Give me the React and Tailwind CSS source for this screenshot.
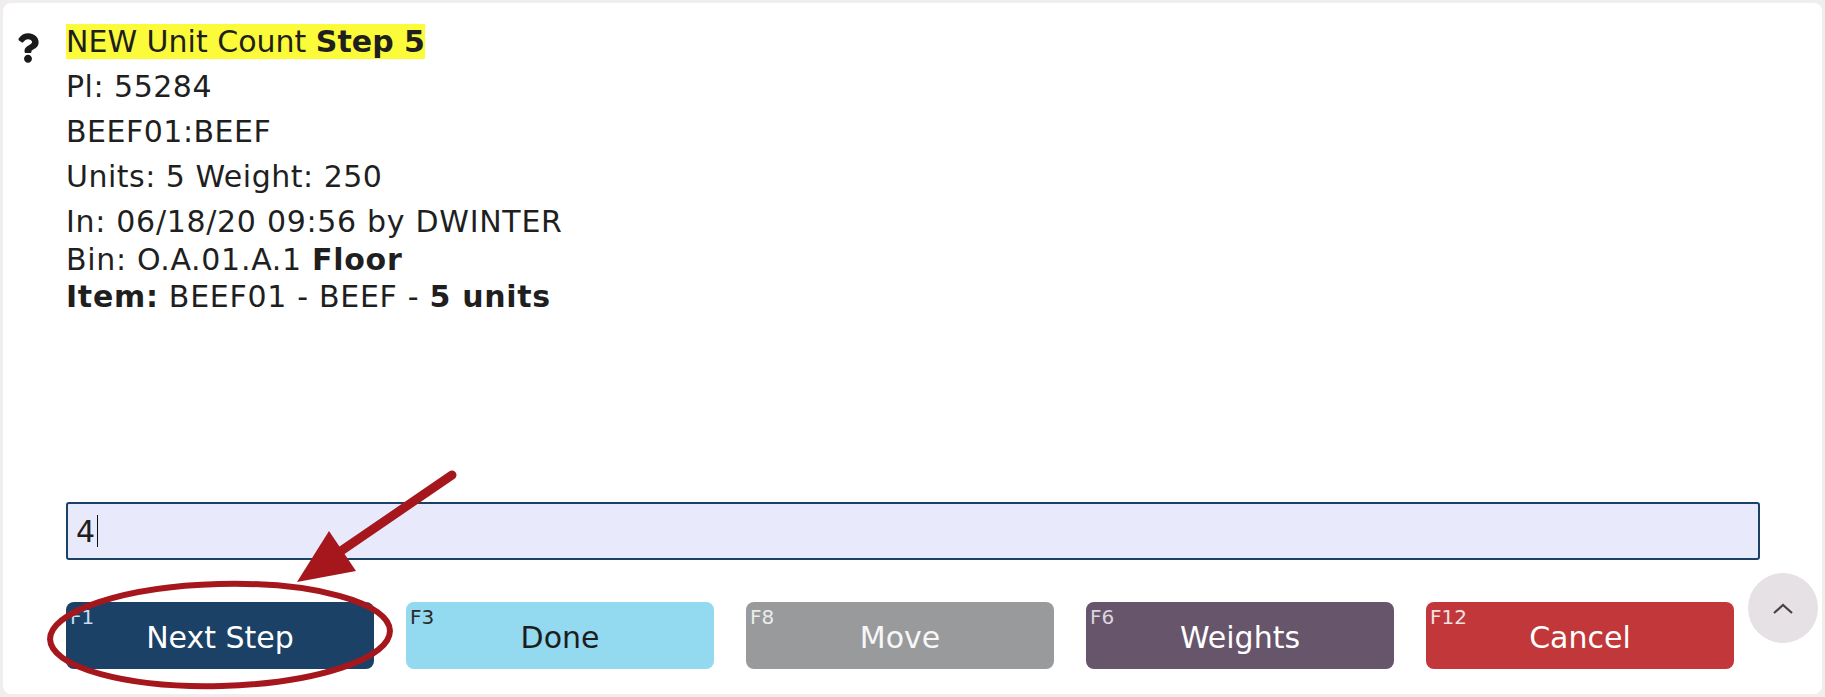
import React from 'react';
import { FaQuestion } from 'react-icons/fa';

const buttons = [
  { key: 'F1', label: 'Next Step', bg: 'bg-[#1b4266]', text: 'text-white', keyColor: 'text-[#c6def2]' },
  { key: 'F3', label: 'Done', bg: 'bg-[#93d9f0]', text: 'text-[#1d1d1d]', keyColor: 'text-[#2a2a2a]' },
  { key: 'F8', label: 'Move', bg: 'bg-[#999a9c]', text: 'text-[#f7f7f7]', keyColor: 'text-[#ececec]' },
  { key: 'F6', label: 'Weights', bg: 'bg-[#67556b]', text: 'text-white', keyColor: 'text-[#ddd5de]' },
  { key: 'F12', label: 'Cancel', bg: 'bg-[#c1373a]', text: 'text-white', keyColor: 'text-[#f0e2e2]' },
];

const Annotation = () => (
  <svg className="absolute inset-0 pointer-events-none" width="1825" height="697" viewBox="0 0 1825 697">
    {/* arrow */}
    <line x1="452" y1="475" x2="338" y2="553" stroke="#a5171d" strokeWidth="9" strokeLinecap="round" />
    <polygon points="297,582 329,531 356,571" fill="#a5171d" />
    {/* ellipse round the first button */}
    <ellipse cx="220" cy="635" rx="170" ry="51" fill="none" stroke="#a5171d" strokeWidth="6" transform="rotate(-1.5 220 635)" />
  </svg>
);

const App = () => {
  return (
    <div className="relative w-[1825px] h-[697px] bg-[#f0eeec] p-[3px] font-['DejaVu_Sans',Verdana,sans-serif] text-[#1f1f1f]">
      <div className="h-full bg-white rounded-lg flex flex-col">
        {/* Prompt */}
        <div className="flex">
          <div className="w-[63px] pl-[14px] pt-[30px]">
            <FaQuestion className="w-[22px] h-[30px] text-[#1a1a1a]" />
          </div>
          <div className="pt-[16px] text-[30px]">
            <div className="leading-[45px]">
              <span className="bg-[#fbfb3a]">
                NEW Unit Count <b>Step 5</b>
              </span>
            </div>
            <div className="leading-[45px] tracking-[0.5px]">Pl: 55284</div>
            <div className="leading-[45px] tracking-[0.5px]">BEEF01:BEEF</div>
            <div className="leading-[45px] tracking-[0.5px]">Units: 5 Weight: 250</div>
            <div className="mt-[4px] leading-[37.5px] tracking-[0.7px]">
              <div>In: 06/18/20 09:56 by DWINTER</div>
              <div>
                Bin: O.A.01.A.1 <b>Floor</b>
              </div>
              <div>
                <b>Item:</b> BEEF01 - BEEF - <b>5 units</b>
              </div>
            </div>
          </div>
        </div>

        {/* Entry */}
        <div className="mt-auto ml-[63px] mr-[62px]">
          <div className="h-[58px] border-2 border-[#1b4266] rounded-[3px] bg-[#e8eafc] flex items-center pl-[8px] text-[30px]">
            <span>4</span>
            <span className="ml-[2px] w-px h-[32px] bg-[#111]" />
          </div>
        </div>

        {/* Function keys */}
        <div className="mt-[42px] mb-[25px] ml-[63px] flex gap-[32px]">
          {buttons.map(b => (
            <div
              key={b.key}
              className={`relative w-[308px] h-[67px] rounded-lg ${b.bg} ${b.text} flex items-center justify-center pt-[4px] text-[30px]`}
            >
              <span className={`absolute left-[4px] top-[4px] text-[20px] leading-[22px] ${b.keyColor}`}>{b.key}</span>
              {b.label}
            </div>
          ))}
        </div>
      </div>

      {/* Scroll to top */}
      <div className="absolute left-[1748px] top-[573px] w-[70px] h-[70px] rounded-full bg-[#e6e1e4] flex items-center justify-center">
        <svg width="22" height="12" viewBox="0 0 22 12" fill="none">
          <path d="M2 11 L11 3 L20 11" stroke="#4a3f45" strokeWidth="2.2" />
        </svg>
      </div>

      <Annotation />
    </div>
  );
};

export default App;
